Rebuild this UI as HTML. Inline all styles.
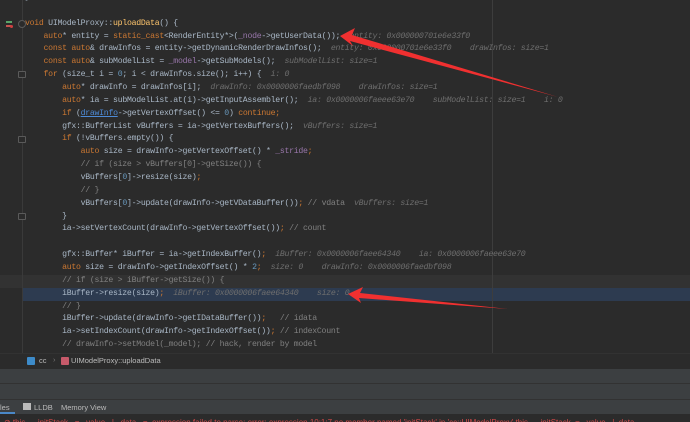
<!DOCTYPE html>
<html><head><meta charset="utf-8"><style>
html,body{margin:0;padding:0;}
body{width:690px;height:422px;overflow:hidden;background:#2b2b2b;position:relative;font-family:"Liberation Mono",monospace;}
.ed{position:absolute;left:0;top:0;width:690px;height:353px;background:#2b2b2b;overflow:hidden;}
.gl{position:absolute;left:22px;top:0;width:1px;height:353px;background:#3a3a3a;}
.rm{position:absolute;left:492px;top:0;width:1px;height:353px;background:#3d3d3d;}
.ln{position:absolute;left:25px;white-space:pre;font-size:8.2px;letter-spacing:-0.28px;line-height:12.86px;height:12.86px;color:#a9b7c6;}
.k{color:#cc7832}.f{color:#ffc66d}.p{color:#9876aa}.n{color:#6897bb}.c{color:#808080}
.h{color:#6e6e6e;font-style:italic}.u{color:#4d8ad6;text-decoration:underline}
.hl{position:absolute;left:0;width:690px;height:12.86px}
.fold{position:absolute;left:18px;width:6px;height:6px;border:1px solid #5a5a5a;border-radius:1px;background:#2b2b2b}
.bc{position:absolute;left:0;top:353px;width:690px;height:15px;background:#2b2b2b;border-top:1px solid #323232;font-family:"Liberation Sans",sans-serif;font-size:7.5px;color:#bbbbbb}
.pan{position:absolute;left:0;width:690px;background:#3c3f41}
</style></head><body>
<div class="ed">
<div class="hl" style="top:275px;background:#323232"></div>
<div class="hl" style="top:288px;background:#2d3b50;left:22px"></div>
<div class="gl"></div>
<div class="rm"></div>
<div class="fold" style="top:20px;border-radius:50%"></div>
<div class="fold" style="top:71px;height:5px"></div>
<div class="fold" style="top:136px;height:5px"></div>
<div class="fold" style="top:213px;height:5px"></div>
<div style="position:absolute;left:6px;top:21px;width:6px;height:2px;background:#5aa469"></div>
<div style="position:absolute;left:6px;top:25px;width:5px;height:2px;background:#c75450"></div>
<div style="position:absolute;left:10px;top:25px;width:3px;height:3px;border-radius:50%;background:#d04040"></div>

<div class="ln" style="top:-8px">}</div>
<div class="ln" style="top:17.6px"><span class="k">void</span> UIModelProxy::<span class="f">uploadData</span>() {</div>
<div class="ln" style="top:30.5px">    <span class="k">auto</span>* entity = <span class="k">static_cast</span>&lt;RenderEntity*&gt;(<span class="p">_node</span>-&gt;getUserData());  <span class="h">entity: 0x000000701e6e33f0</span></div>
<div class="ln" style="top:43.3px">    <span class="k">const auto</span>&amp; drawInfos = entity-&gt;getDynamicRenderDrawInfos();  <span class="h">entity: 0x000000701e6e33f0    drawInfos: size=1</span></div>
<div class="ln" style="top:56.2px">    <span class="k">const auto</span>&amp; subModelList = <span class="p">_model</span>-&gt;getSubModels();  <span class="h">subModelList: size=1</span></div>
<div class="ln" style="top:69.0px">    <span class="k">for</span> (size_t i = <span class="n">0</span>; i &lt; drawInfos.size(); i++) {  <span class="h">i: 0</span></div>
<div class="ln" style="top:81.9px">        <span class="k">auto</span>* drawInfo = drawInfos[i];  <span class="h">drawInfo: 0x0000006faedbf098    drawInfos: size=1</span></div>
<div class="ln" style="top:94.8px">        <span class="k">auto</span>* ia = subModelList.at(i)-&gt;getInputAssembler();  <span class="h">ia: 0x0000006faeee63e70    subModelList: size=1    i: 0</span></div>
<div class="ln" style="top:107.6px">        <span class="k">if</span> (<span class="u">drawInfo</span>-&gt;getVertexOffset() &lt;= <span class="n">0</span>) <span class="k">continue;</span></div>
<div class="ln" style="top:120.5px">        gfx::BufferList vBuffers = ia-&gt;getVertexBuffers();  <span class="h">vBuffers: size=1</span></div>
<div class="ln" style="top:133.3px">        <span class="k">if</span> (!vBuffers.empty()) {</div>
<div class="ln" style="top:146.2px">            <span class="k">auto</span> size = drawInfo-&gt;getVertexOffset() * <span class="p">_stride</span><span class="k">;</span></div>
<div class="ln" style="top:159.1px"><span class="c">            // if (size &gt; vBuffers[0]-&gt;getSize()) {</span></div>
<div class="ln" style="top:171.9px">            vBuffers[<span class="n">0</span>]-&gt;resize(size)<span class="k">;</span></div>
<div class="ln" style="top:184.8px"><span class="c">            // }</span></div>
<div class="ln" style="top:197.6px">            vBuffers[<span class="n">0</span>]-&gt;update(drawInfo-&gt;getVDataBuffer())<span class="k">;</span> <span class="c">// vdata</span>  <span class="h">vBuffers: size=1</span></div>
<div class="ln" style="top:210.5px">        }</div>
<div class="ln" style="top:223.4px">        ia-&gt;setVertexCount(drawInfo-&gt;getVertexOffset())<span class="k">;</span> <span class="c">// count</span></div>
<div class="ln" style="top:249.1px">        gfx::Buffer* iBuffer = ia-&gt;getIndexBuffer()<span class="k">;</span>  <span class="h">iBuffer: 0x0000006faee64340    ia: 0x0000006faeee63e70</span></div>
<div class="ln" style="top:261.9px">        <span class="k">auto</span> size = drawInfo-&gt;getIndexOffset() * <span class="n">2</span><span class="k">;</span>  <span class="h">size: 0    drawInfo: 0x0000006faedbf098</span></div>
<div class="ln" style="top:274.8px"><span class="c">        // if (size &gt; iBuffer-&gt;getSize()) {</span></div>
<div class="ln" style="top:287.7px">        iBuffer-&gt;resize(size)<span class="k">;</span>  <span class="h">iBuffer: 0x0000006faee64340    size: 0</span></div>
<div class="ln" style="top:300.5px"><span class="c">        // }</span></div>
<div class="ln" style="top:313.4px">        iBuffer-&gt;update(drawInfo-&gt;getIDataBuffer())<span class="k">;</span>   <span class="c">// idata</span></div>
<div class="ln" style="top:326.2px">        ia-&gt;setIndexCount(drawInfo-&gt;getIndexOffset())<span class="k">;</span> <span class="c">// indexCount</span></div>
<div class="ln" style="top:339.1px"><span class="c">        // drawInfo-&gt;setModel(_model); // hack, render by model</span></div>

<svg style="position:absolute;left:0;top:0" width="690" height="353">
<polygon points="340,36 355,28 352,35 558,97 350,41 353,46" fill="#f03030"/>
<polygon points="348,294 363,287 360,293 508,309 359,298 361,303" fill="#f03030"/>
</svg>
</div>

<div class="bc">
<div style="position:absolute;left:27px;top:3px;width:8px;height:8px;background:#3d8bc9;border-radius:1px"></div>
<span style="position:absolute;left:39px;top:2px">cc</span>
<span style="position:absolute;left:53px;top:1px;color:#777">›</span>
<div style="position:absolute;left:61px;top:3px;width:8px;height:8px;background:#c75a6a;border-radius:1px"></div>
<span style="position:absolute;left:71px;top:2px">UIModelProxy::uploadData</span>
</div>
<div class="pan" style="top:369px;height:14px;border-bottom:1px solid #323232"></div>
<div class="pan" style="top:384px;height:15px;border-bottom:1px solid #323232"></div>
<div class="pan" style="top:400px;height:14px;font-family:'Liberation Sans',sans-serif;font-size:7.5px;color:#bbb">
<span style="position:absolute;left:0;top:3px">les</span>
<div style="position:absolute;left:0;top:12px;width:15px;height:2px;background:#4a88c7"></div>
<div style="position:absolute;left:23px;top:3px;width:8px;height:7px;background:#bbb"></div>
<span style="position:absolute;left:34px;top:3px">LLDB</span>
<span style="position:absolute;left:61px;top:3px">Memory View</span>
</div>
<div class="pan" style="top:414px;height:8px;background:#2b2b2b;overflow:hidden;font-family:'Liberation Sans',sans-serif;font-size:8px;color:#d04848;white-space:pre">
<span style="position:absolute;left:4px;top:4px">⊘ this → initStack   =   value   |   data   =  expression failed to parse: error: expression 10:1:7 no member named 'initStack' in 'cc::UIModelProxy' this → initStack  =   value   |  data  ...</span>
</div>
</body></html>
